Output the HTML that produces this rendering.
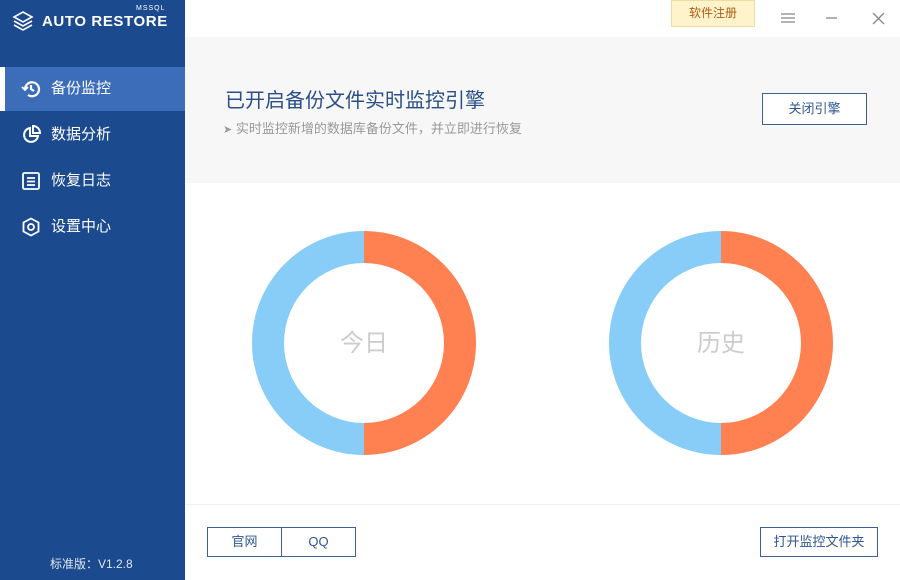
<!DOCTYPE html>
<html><head><meta charset="utf-8"><style>
*{margin:0;padding:0;box-sizing:border-box}
body{width:900px;height:580px;overflow:hidden;background:#fff;font-family:"Liberation Sans","Noto Sans CJK SC",sans-serif;position:relative}
.sb{position:absolute;left:0;top:0;width:185px;height:580px;background:#1c4a8e;color:#fff}
.logo{position:absolute;left:42px;top:13px;font-size:15px;font-weight:bold;letter-spacing:0.6px}
.ms{position:absolute;left:136px;top:5px;font-size:7px;letter-spacing:1px}
.it{position:absolute;left:0;width:185px;height:44px;font-size:15px;line-height:44px;padding-left:51px}
.it.a{background:#3c6db8}
.it.a:before{content:"";position:absolute;left:0;top:0;width:5px;height:44px;background:#fff}
.ic{position:absolute;left:21px;top:12px}
.ver{position:absolute;left:50px;top:555px;font-size:12px;color:#dfe6f0}
.hd{position:absolute;left:185px;top:37px;width:715px;height:146px;background:#f7f7f8}
.btn{position:absolute;border:1px solid #3d5f95;color:#2e5590;font-size:13px;text-align:center;background:#fff}
</style></head><body>
<div class="sb">
<svg style="position:absolute;left:12px;top:10px" width="22" height="22" viewBox="0 0 22 22" fill="none" stroke="#fff" stroke-width="1.6"><path d="M11 2 L20 7 L11 12 L2 7Z"/><path d="M2 11 L11 16 L20 11"/><path d="M2 15 L11 20 L20 15"/></svg>
<div class="ms">MSSQL</div>
<div class="logo">AUTO RESTORE</div>
<div class="it a" style="top:67px"><svg class="ic" width="20" height="20" viewBox="0 0 20 20" fill="none" stroke="#fff" stroke-width="2.2"><path d="M4 10 A7 7 0 1 1 7 16"/><path d="M10 6 V10 L13 12"/><path d="M1 8 L4 11 L7 8" stroke-width="1.8"/></svg>备份监控</div>
<div class="it" style="top:113px"><svg class="ic" width="20" height="20" viewBox="0 0 20 20" fill="none" stroke="#fff" stroke-width="2"><path d="M9 3 A7 7 0 1 0 17 11 H9Z"/><path d="M12 1 V8 H19 A7 7 0 0 0 12 1Z"/></svg>数据分析</div>
<div class="it" style="top:159px"><svg class="ic" width="20" height="20" viewBox="0 0 20 20" fill="none" stroke="#fff" stroke-width="1.8"><rect x="2" y="2" width="16" height="16" rx="1.5"/><path d="M6 7H14M6 10.5H14M6 14H14"/></svg>恢复日志</div>
<div class="it" style="top:205px"><svg class="ic" width="20" height="20" viewBox="0 0 20 20" fill="none" stroke="#fff" stroke-width="1.8"><path d="M10 1.5 L17.5 5.5 V14.5 L10 18.5 L2.5 14.5 V5.5Z"/><circle cx="10" cy="10" r="3"/></svg>设置中心</div>
<div class="ver">标准版：V1.2.8</div>
</div>
<div style="position:absolute;left:671px;top:0;width:84px;height:27px;background:#fff3cc;border:1px solid #f0dca0;color:#b05a10;font-size:12px;text-align:center;line-height:25px">软件注册</div>
<svg style="position:absolute;left:780px;top:11px" width="110" height="16" stroke="#888" stroke-width="1.3" fill="none"><path d="M1 3H15M1 7H15M1 11H15"/><path d="M46 7H57"/><path d="M93 2L104 13M104 2L93 13"/></svg>
<div class="hd">
<div style="position:absolute;left:40px;top:47px;font-size:20px;color:#2a4f86">已开启备份文件实时监控引擎</div>
<div style="position:absolute;left:38px;top:81px;font-size:13px;color:#999"><span style="font-size:11px">➤</span> 实时监控新增的数据库备份文件，并立即进行恢复</div>
<div class="btn" style="left:577px;top:56px;width:105px;height:32px;line-height:30px">关闭引擎</div>
</div>
<svg style="position:absolute;left:185px;top:183px" width="715" height="320">
<path d="M179 48 A112 112 0 0 1 179 272 L179 240 A80 80 0 0 0 179 80Z" fill="#ff8050"/>
<path d="M179 48 A112 112 0 0 0 179 272 L179 240 A80 80 0 0 1 179 80Z" fill="#88cdf8"/>
<path d="M536 48 A112 112 0 0 1 536 272 L536 240 A80 80 0 0 0 536 80Z" fill="#ff8050"/>
<path d="M536 48 A112 112 0 0 0 536 272 L536 240 A80 80 0 0 1 536 80Z" fill="#88cdf8"/>
<text x="179" y="168" font-size="24" fill="#ccc" text-anchor="middle" font-family="Noto Sans CJK SC">今日</text>
<text x="536" y="168" font-size="24" fill="#ccc" text-anchor="middle" font-family="Noto Sans CJK SC">历史</text>
</svg>
<div style="position:absolute;left:185px;top:504px;width:715px;height:1px;background:#eee"></div>
<div class="btn" style="left:207px;top:527px;width:75px;height:30px;line-height:28px">官网</div>
<div class="btn" style="left:281px;top:527px;width:75px;height:30px;line-height:28px">QQ</div>
<div class="btn" style="left:760px;top:527px;width:118px;height:30px;line-height:28px;white-space:nowrap">打开监控文件夹</div>
</body></html>
